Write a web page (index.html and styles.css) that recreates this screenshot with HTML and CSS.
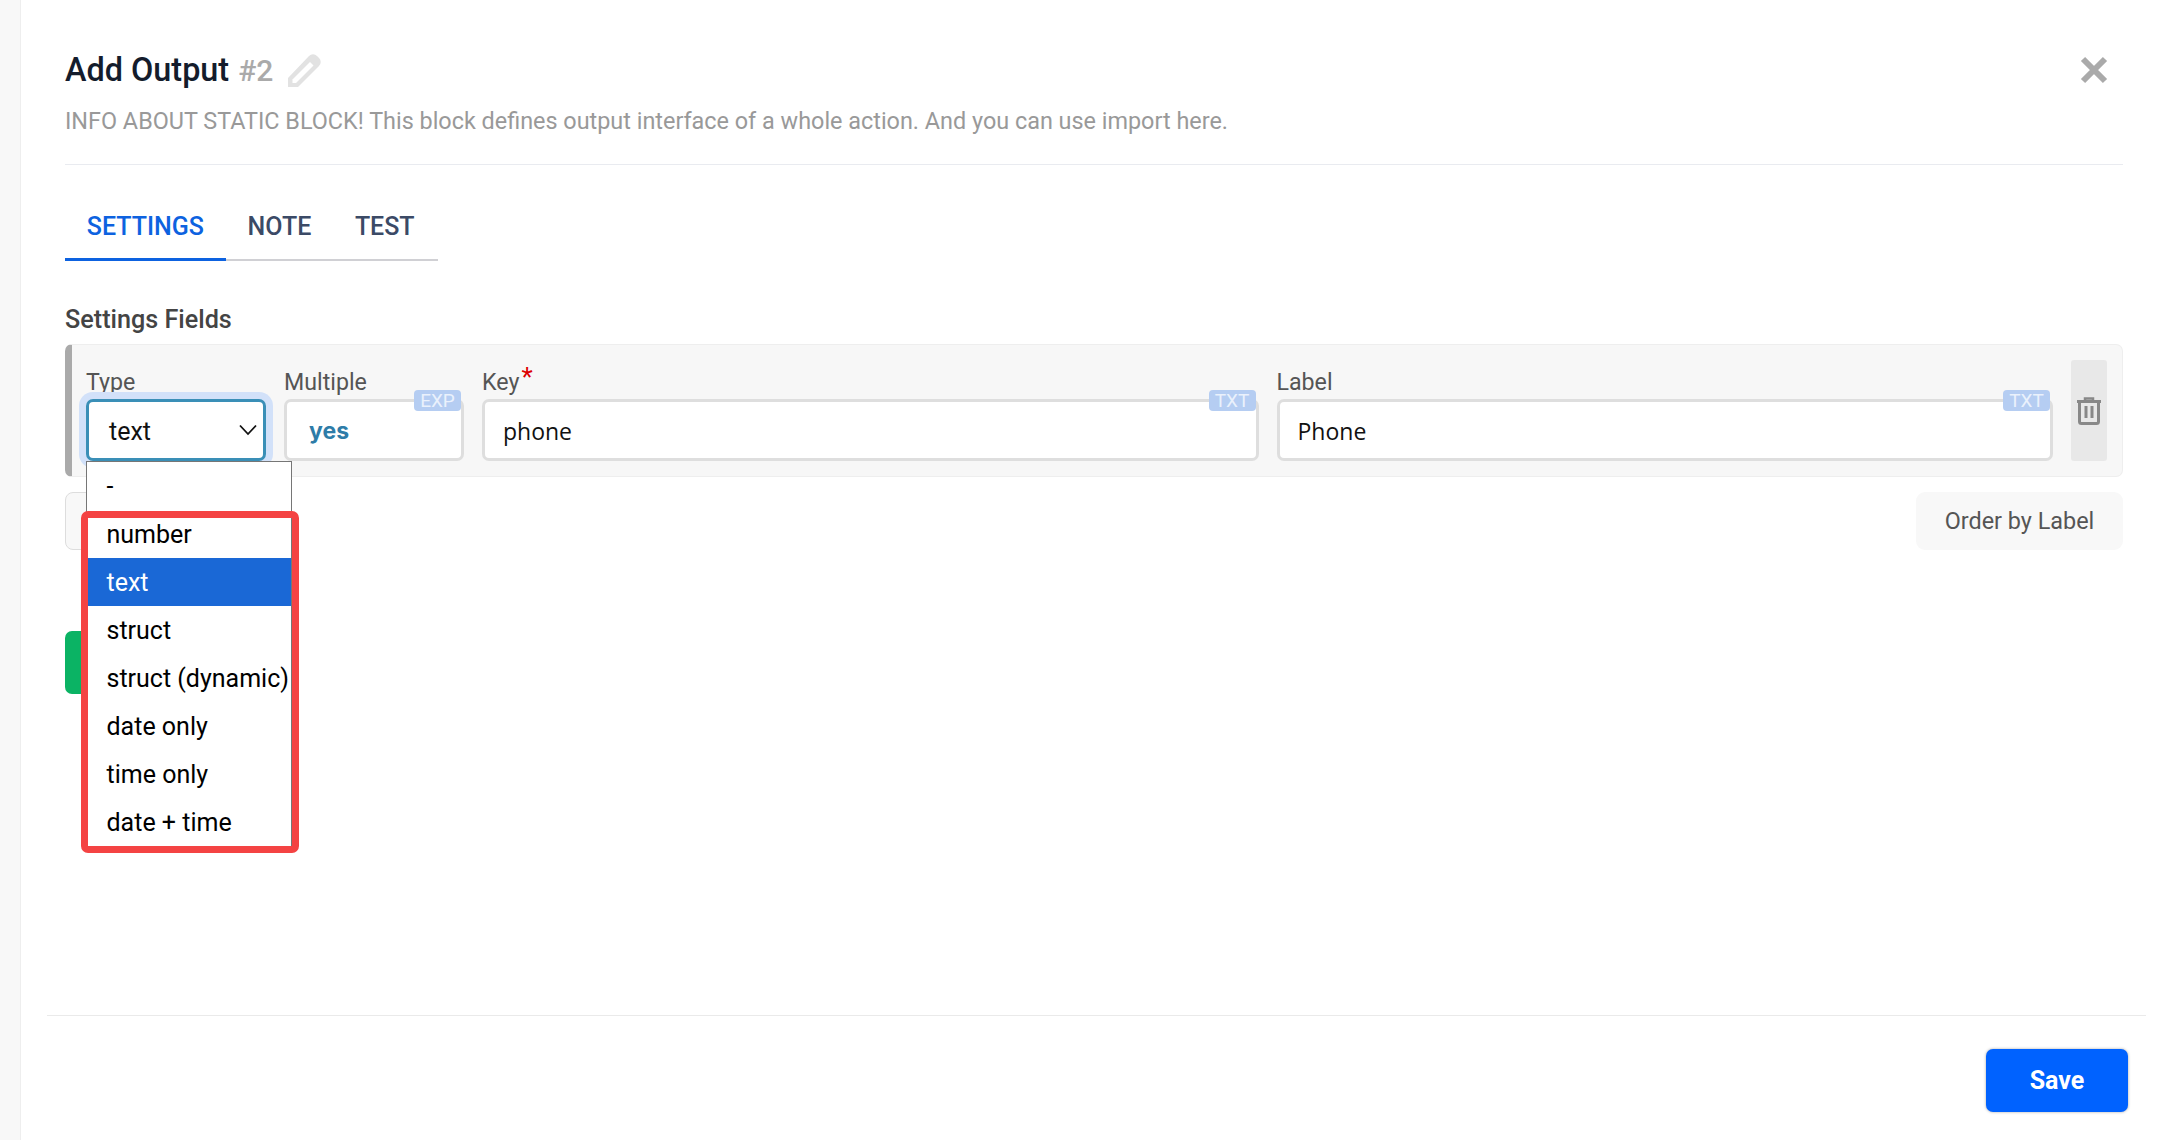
FILE: index.html
```html
<!DOCTYPE html>
<html lang="en">
<head>
<meta charset="utf-8">
<title>Add Output</title>
<link rel="stylesheet" href="styles.css">
</head>
<body>
<div class="page">
  <div class="strip"></div>
  <main class="modal">
    <div class="content">
      <header class="header">
        <div class="title-row">
          <div class="title-group">
            <h1 class="title">Add Output</h1>
            <span class="number">#2</span>
            <svg class="pencil" viewBox="0 0 34 34" width="34" height="34" aria-hidden="true"><path d="M0 25 21 3a5.500 5.500 0 0 1 8 0l2 2a5.500 5.500 0 0 1 0 8L10 34H0z" fill="#e2e2e2"/><path d="M22 9 25.500 12.500 8 30H4.500V26.500z" fill="#fff"/></svg>
          </div>
          <svg class="close" viewBox="0 0 28 28" width="28" height="28" aria-hidden="true"><path d="M3 3 25 25M25 3 3 25" stroke="#aaa" stroke-width="6" fill="none"/></svg>
        </div>
        <p class="desc">INFO ABOUT STATIC BLOCK! This block defines output interface of a whole action. And you can use import here.</p>
      </header>

      <nav class="tabs">
        <span class="tab tab-active">SETTINGS</span>
        <span class="tab">NOTE</span>
        <span class="tab">TEST</span>
      </nav>

      <h2 class="section-title">Settings Fields</h2>

      <section class="panel">
        <div class="field field-type">
          <label class="label">Type</label>
          <div class="select">
            <span>text</span>
            <svg class="chevron" viewBox="0 0 18 12" width="18" height="12" aria-hidden="true"><path d="M1 1.500 9 10 17 1.500" stroke="#111" stroke-width="1.800" fill="none"/></svg>
          </div>
          <div class="dropdown">
            <div class="option">-</div>
            <div class="option">number</div>
            <div class="option option-selected">text</div>
            <div class="option">struct</div>
            <div class="option">struct (dynamic)</div>
            <div class="option">date only</div>
            <div class="option">time only</div>
            <div class="option">date + time</div>
            <div class="annotation"></div>
          </div>
        </div>
        <div class="field field-multiple">
          <label class="label">Multiple</label>
          <div class="input input-exp">yes<span class="badge">EXP</span></div>
        </div>
        <div class="field field-grow">
          <label class="label">Key<span class="star">*</span></label>
          <div class="input">phone<span class="badge">TXT</span></div>
        </div>
        <div class="field field-grow">
          <label class="label">Label</label>
          <div class="input">Phone<span class="badge">TXT</span></div>
        </div>
        <button class="delete" type="button" aria-label="Delete">
          <svg viewBox="0 0 24 28" width="24" height="28" aria-hidden="true"><path d="M0 4.500H24" stroke="#888" stroke-width="3" fill="none"/><path d="M8 3.500V1.500H16V3.500" stroke="#888" stroke-width="2.500" fill="none"/><path d="M2.500 5V24.500a2 2 0 0 0 2 2H19.500a2 2 0 0 0 2-2V5" stroke="#888" stroke-width="3" fill="none"/><path d="M9 9V21M15 9V21" stroke="#888" stroke-width="3" fill="none"/></svg>
        </button>
      </section>

      <div class="actions">
        <div class="add-box"></div>
        <button class="order" type="button">Order by Label</button>
      </div>
      <div class="green-btn"></div>
    </div>

    <footer class="footer">
      <button class="save" type="button">Save</button>
    </footer>
  </main>
</div>
</body>
</html>
```
FILE: styles.css
```css
* { box-sizing: border-box; }
html, body { margin: 0; padding: 0; }
body { background: #fff; font-family: Roboto, "Liberation Sans", sans-serif; }
.page { display: flex; width: 2165px; height: 1140px; overflow: hidden; }
.strip { width: 21px; flex: none; background: #f8f8f8; border-right: 1px solid #eeeeee; }
.modal { flex: 1; display: flex; flex-direction: column; min-width: 0; }
.content { flex: 1; padding: 50px 42px 0 44px; }

.header { border-bottom: 1px solid #e9ebf0; padding-bottom: 27px; }
.title-row { display: flex; justify-content: space-between; align-items: center; height: 40px; padding-right: 15px; }
.title-group { display: flex; align-items: center; }
.title { margin: 0; font-size: 32.4px; font-weight: 500; color: #141c2c; line-height: 40px; }
.number { margin-left: 9px; font-size: 30px; font-weight: 500; color: #aaaaaa; }
.pencil { margin-left: 15px; }
.desc { margin: 15px 0 0; font-size: 23.4px; line-height: 32px; color: #999999; }

.tabs { display: flex; width: 373px; margin-top: 30px; border-bottom: 2px solid #d0d0d4; }
.tab { height: 64px; padding: 0 21.800px; font-size: 25px; font-weight: 500; line-height: 64px; color: #3b4a66; }
.tab-active { color: #0d62e0; border-bottom: 3px solid #0d62e0; margin-bottom: -2px; height: 66px; }

.section-title { margin: 43px 0 8px; font-size: 25.2px; font-weight: 500; line-height: 32px; color: #444444; }

.panel { display: flex; gap: 18px; height: 133px; padding: 15px 15px 15px 14px; background: #f7f7f7; border: 1px solid #eeeeee; border-left: 7px solid #aaaaaa; border-radius: 7px; }
.field { position: relative; display: flex; flex-direction: column; }
.field-type { width: 180px; flex: none; }
.field-multiple { width: 180px; flex: none; }
.field-grow { flex: 1; min-width: 0; }
.label { display: block; height: 39px; padding-top: 7px; font-size: 23.2px; line-height: 30px; color: #555555; }
.star { position: relative; top: -4px; margin-left: 2px; color: #dd0000; font-size: 26px; line-height: 0; }

.select { display: flex; align-items: center; justify-content: space-between; height: 62px; padding: 3px 6px 0 20px; background: #fff; border: 3px solid #3a8fb7; border-radius: 7px; box-shadow: 0 0 0 7px #d2e1f9; font-size: 25px; color: #111; }
.chevron { flex: none; margin-top: -4px; }

.input { position: relative; display: flex; align-items: center; height: 62px; padding: 2px 0 0 18px; background: #fff; border: 3px solid #dedede; border-radius: 7px; font-family: "Open Sans", sans-serif; font-size: 23px; color: #111; }
.input-exp { padding-left: 22px; font-family: Inter, sans-serif; font-weight: 700; color: #2e7ca8; }
.badge { position: absolute; top: -12px; right: 0; width: 47px; height: 21px; background: #b5cdf2; border-radius: 4px; font-family: Roboto, sans-serif; font-size: 19px; font-weight: 400; line-height: 21px; text-align: center; color: #eaf1fc; }

.delete { flex: none; width: 36px; align-self: stretch; display: flex; align-items: center; justify-content: center; padding: 0; background: #e8e8e8; border: 0; border-radius: 3px; }

.dropdown { position: absolute; top: 101px; left: 0; width: 206px; background: #fff; border: 1px solid #767676; z-index: 5; }
.option { height: 48px; padding-left: 19.500px; font-size: 25px; line-height: 50px; color: #000; white-space: nowrap; }
.option-selected { background: #1a68d6; color: #fff; }
.annotation { position: absolute; left: -6px; top: 49px; width: 218px; height: 342px; border: 7px solid #f44343; border-radius: 7px; }

.actions { display: flex; justify-content: space-between; margin-top: 15px; }
.add-box { width: 200px; height: 58px; background: #f8f8f8; border: 1px solid #dddddd; border-radius: 8px; }
.order { width: 207px; height: 58px; background: #f8f8f8; border: 0; border-radius: 9px; font-family: Roboto, sans-serif; font-size: 23.4px; color: #555555; }
.green-btn { width: 200px; height: 63px; margin-top: 81px; background: #0bb364; border-radius: 7px; }

.footer { display: flex; justify-content: flex-end; height: 125px; margin: 0 19px 0 26px; padding: 33px 18px 0 0; border-top: 1px solid #eaeaea; }
.save { width: 142px; height: 63px; background: #0062ff; border: 0; border-radius: 7px; box-shadow: 0 0 3px rgba(0,0,0,.35); font-family: Roboto, sans-serif; font-size: 25px; font-weight: 700; color: #fff; }
```
